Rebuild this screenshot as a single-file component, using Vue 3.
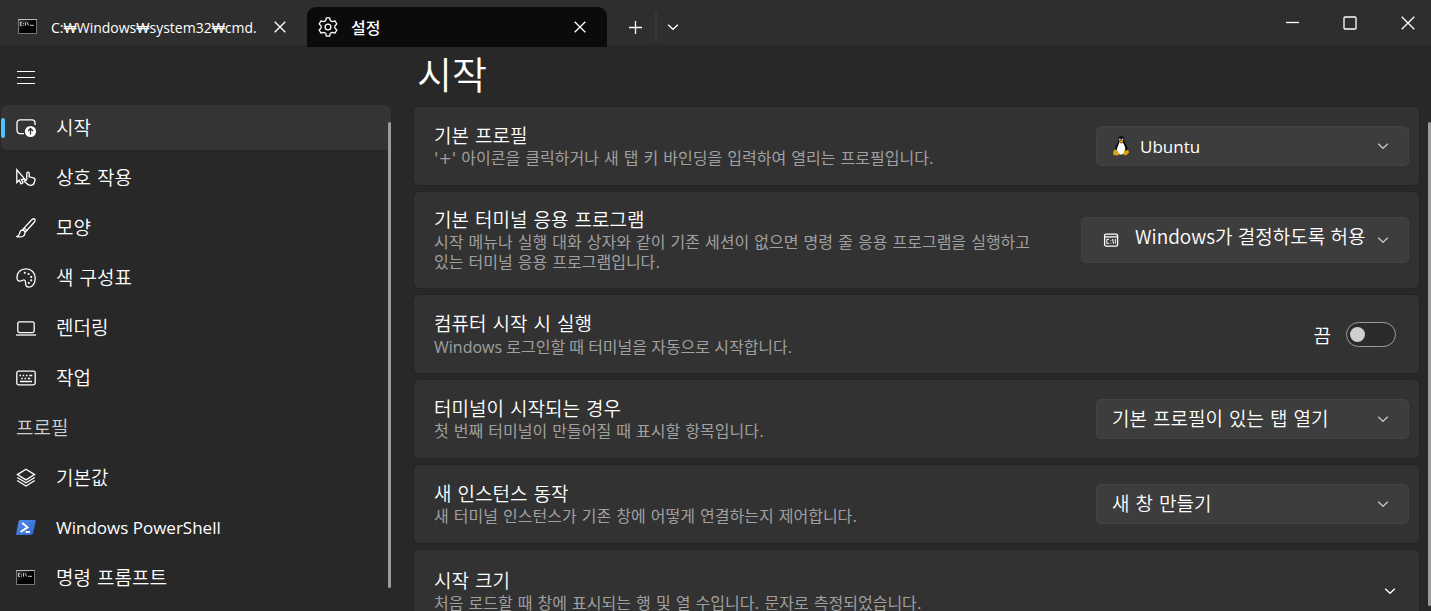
<script setup>
import { ref } from 'vue'

const navItems = [
  { icon: 'launch', label: '시작' },
  { icon: 'pointer', label: '상호 작용' },
  { icon: 'brush', label: '모양' },
  { icon: 'palette', label: '색 구성표' },
  { icon: 'laptop', label: '렌더링' },
  { icon: 'keyboard', label: '작업' },
]
const profileItems = [
  { icon: 'layers', label: '기본값' },
  { icon: 'powershell', label: 'Windows PowerShell', latin: true },
  { icon: 'cmd', label: '명령 프롬프트' },
]
const current = ref('시작')

const cards = [
  {
    id: 'profile',
    title: '기본 프로필',
    text: "'+' 아이콘을 클릭하거나 새 탭 키 바인딩을 입력하여 열리는 프로필입니다.",
    kind: 'select',
    icon: 'tux',
    value: 'Ubuntu',
  },
  {
    id: 'terminal',
    title: '기본 터미널 응용 프로그램',
    text: '시작 메뉴나 실행 대화 상자와 같이 기존 세션이 없으면 명령 줄 응용 프로그램을 실행하고 있는 터미널 응용 프로그램입니다.',
    kind: 'select',
    icon: 'console',
    value: 'Windows가 결정하도록 허용',
  },
  {
    id: 'startup',
    title: '컴퓨터 시작 시 실행',
    text: 'Windows 로그인할 때 터미널을 자동으로 시작합니다.',
    mixed: true,
    kind: 'toggle',
  },
  {
    id: 'launch',
    title: '터미널이 시작되는 경우',
    text: '첫 번째 터미널이 만들어질 때 표시할 항목입니다.',
    kind: 'select',
    value: '기본 프로필이 있는 탭 열기',
  },
  {
    id: 'instance',
    title: '새 인스턴스 동작',
    text: '새 터미널 인스턴스가 기존 창에 어떻게 연결하는지 제어합니다.',
    kind: 'select',
    value: '새 창 만들기',
  },
]
</script>

<template>
  <div class="window" lang="ko">
    <svg class="defs" aria-hidden="true">
      <defs>
        <linearGradient id="ps-fill" x1="0" y1="0" x2="1" y2="1">
          <stop offset="0" stop-color="#5391f0" />
          <stop offset="1" stop-color="#2f62c4" />
        </linearGradient>
        <linearGradient id="cmd-fill" x1="0" y1="0" x2="1" y2="1">
          <stop offset="0" stop-color="#4a4a4a" />
          <stop offset="0.5" stop-color="#000" />
          <stop offset="1" stop-color="#000" />
        </linearGradient>
        <symbol id="i-launch" viewBox="0 0 20 20">
          <path d="M8 15.6H4A3 3 0 0 1 1 12.600V4.800A3 3 0 0 1 4 1.800H16A3 3 0 0 1 19 4.800V7" />
          <circle cx="14.500" cy="13.500" r="5.600" fill="#fff" stroke="none" />
          <path d="M14.500 16.500V10.800M12 13L14.500 10.500L17 13" stroke="#333" />
        </symbol>
        <symbol id="i-pointer" viewBox="0 0 20 20">
          <path d="M0.800 1.800V14.500L3.200 12.200L5 15.800L7 14.800L5.400 11.400H9L0.800 1.800Z" />
          <path d="M10.800 11.800V5.300A1.200 1.200 0 0 1 13.200 5.300V8.800L17.500 9.800Q19.300 10.300 19 12L18.300 14.500Q17.500 17.300 14.500 17.300Q12.300 17.300 11 15.800L8.300 13.300Q9 11.700 10.800 12.500" />
        </symbol>
        <symbol id="i-brush" viewBox="0 0 20 20">
          <path d="M6.300 12L15.500 2Q17.500 0.200 18.700 1Q19.700 2 18.200 4.300L9 14.500M6.300 12Q4.300 12.300 3.800 14.500Q3.500 17.500 0.800 18.600Q5 19.500 7.500 18Q9 16.800 9 14.500Q8.800 12.200 6.300 12ZM8 10.300Q10 10.700 10.700 12.600" />
        </symbol>
        <symbol id="i-palette" viewBox="0 0 20 20">
          <path d="M1 10.500C0.500 4 5 0.800 10 0.800C15.500 0.800 19.200 4.800 19.200 10C19.200 15.500 16.500 19.200 13 19.200C10.300 19.200 9.600 17.300 9.600 15.300C9.600 12.300 8.500 11.400 6.800 12.300C4.500 13.500 1.300 13.700 1 10.500Z" />
          <g fill="currentColor" stroke="none">
            <circle cx="8.800" cy="4.800" r="1.100" /><circle cx="12.600" cy="6" r="1.100" /><circle cx="15.200" cy="8.900" r="1.100" /><circle cx="15.200" cy="12.300" r="1.100" /><circle cx="12.800" cy="15" r="1.100" />
          </g>
        </symbol>
        <symbol id="i-laptop" viewBox="0 0 20 20">
          <rect x="1.800" y="3.800" width="16.400" height="10.800" rx="1.800" />
          <path d="M0 17H20" />
        </symbol>
        <symbol id="i-keyboard" viewBox="0 0 20 20">
          <rect x="0.800" y="3.200" width="18.400" height="13.600" rx="1.800" />
          <path d="M3.500 7.500H5M6.700 7.500H8.200M10 7.500H11.500M13.300 7.500H16.300M5.200 10.500H6.700M8.500 10.500H10M11.800 10.500H14.300M4 13.500H16" stroke-width="1.600" />
        </symbol>
        <symbol id="i-layers" viewBox="0 0 20 20">
          <path d="M10 1.300L18.600 6.600L10 11.900L1.400 6.600ZM1.200 9.500L10 14.800L18.800 9.500M1.200 12.500L10 18L18.800 12.500" />
        </symbol>
        <symbol id="i-powershell" viewBox="0 0 20 20">
          <path d="M4.200 2H18.600Q20 2 19.700 3.300L17 15.700Q16.700 17 15.500 17H1.200Q-0.200 17 0.100 15.700L2.700 3.300Q3 2 4.200 2Z" fill="url(#ps-fill)" stroke="none" />
          <path d="M6.300 5L11.500 9.300L4.600 14" stroke="#fff" stroke-width="2" /><path d="M9.500 14H14" stroke="#fff" stroke-width="1.800" />
        </symbol>
        <symbol id="i-cmd" viewBox="0 0 20 20">
          <rect x="0.500" y="2.500" width="18" height="14" fill="url(#cmd-fill)" stroke="#777" stroke-width="1" />
          <path d="M0 2.500H19" stroke="#b9b9c0" stroke-width="1" />
          <path d="M4 5.600H2.500V8.400H4M5.500 6V6.800M5.500 7.800V8.600M7.500 5.300V8.500M9.300 5.300L10.500 8.500M12 8.300H16" stroke="#ddd" stroke-width="0.900" />
        </symbol>
        <symbol id="i-console" viewBox="0 0 20 20">
          <rect x="3.600" y="4.100" width="13" height="12" rx="1.600" />
          <path d="M3.600 6.900H16.600" />
          <path d="M8 9.300H5.800V13.300H8M9.800 10V10.800M9.800 12.800V13.600M11.500 9L12.500 13.600M14.300 9V13.600" stroke-width="1" />
        </symbol>
        <symbol id="i-tux" viewBox="0 0 20 20">
          <g stroke="none">
            <path d="M10.200 0.300C7.800 0.300 7.200 2 7.400 4.500C7.500 7 4 9.500 3.900 14L6 17.500H14L16.800 14C17 10 13.200 7.500 13.200 4.500C13.300 1.800 12.500 0.300 10.200 0.300Z" fill="#050505" />
            <path d="M8.200 6.300L10.200 7.500L12 6.500C13 9 14.700 10.500 14.200 14.500C13.500 18 11.500 18.700 9.500 18.500C7 18.300 5.800 15.500 6 12.800C6.300 10.500 7.800 9 8.200 6.300Z" fill="#fff" />
            <circle cx="8.800" cy="3.500" r="0.900" fill="#ddd" /><circle cx="11.500" cy="3.500" r="0.900" fill="#ddd" />
            <path d="M7.800 5.200Q10 3.500 12.400 5.200Q11 7.200 10 7Z" fill="#e8a51a" />
            <path d="M4.600 13Q7 14.500 8 18Q7.800 20 5.500 19.500L2.300 18.700Q2 17.500 2.500 15Z" fill="#dca312" />
            <path d="M13.200 14Q15.500 15.500 16.500 13.500Q17.800 15 18.200 16.600Q17 18 15.300 19.200Q13.300 20.200 12.800 18.500Z" fill="#dca312" />
          </g>
        </symbol>
        <symbol id="i-gear" viewBox="0 0 20 20">
          <path d="M8.300 0.900H11.700L12.300 3.600L14.300 4.700L17 3.900L18.800 7L16.900 8.900V11.100L18.800 13L17 16.100L14.300 15.300L12.300 16.400L11.700 19.100H8.300L7.700 16.400L5.700 15.300L3 16.100L1.200 13L3.100 11.100V8.900L1.200 7L3 3.900L5.700 4.700L7.700 3.600Z" stroke-linejoin="round" />
          <circle cx="10" cy="10" r="2.900" />
        </symbol>
        <symbol id="i-close" viewBox="0 0 20 20"><path d="M4.700 4.700L15.300 15.300M15.300 4.700L4.700 15.300" /></symbol>
        <symbol id="i-plus" viewBox="0 0 20 20"><path d="M10.500 4V17M4 10.500H17" /></symbol>
        <symbol id="i-chevron" viewBox="0 0 20 20"><path d="M5.200 7.700L10 12.300L14.800 7.700" /></symbol>
        <symbol id="i-menu" viewBox="0 0 20 20"><path d="M1 4.500H19M1 10.500H19M1 16.500H19" stroke-width="1" /></symbol>
        <symbol id="i-minimize" viewBox="0 0 20 20"><path d="M4 9.500H17" /></symbol>
        <symbol id="i-maximize" viewBox="0 0 20 20"><rect x="4" y="4" width="12" height="12" rx="1" /></symbol>
        <symbol id="i-quit" viewBox="0 0 20 20"><path d="M3.700 3.700L16.300 16.300M16.300 3.700L3.700 16.300" /></symbol>
      </defs>
    </svg>

    <header class="titlebar">
      <div class="tab">
        <svg class="icon"><use href="#i-cmd" /></svg>
        <span class="tab-name latin-name">C:₩Windows₩system32₩cmd.</span>
        <button class="tab-close" aria-label="탭 닫기"><svg class="icon"><use href="#i-close" /></svg></button>
      </div>
      <div class="tab active">
        <svg class="icon"><use href="#i-gear" /></svg>
        <span class="tab-name">설정</span>
        <button class="tab-close" aria-label="탭 닫기"><svg class="icon"><use href="#i-close" /></svg></button>
      </div>
      <div class="tab-tools">
        <button aria-label="새 탭"><svg class="icon"><use href="#i-plus" /></svg></button>
        <button aria-label="새 탭 메뉴"><svg class="icon"><use href="#i-chevron" /></svg></button>
      </div>
      <div class="caption">
        <button aria-label="최소화"><svg class="icon"><use href="#i-minimize" /></svg></button>
        <button aria-label="최대화"><svg class="icon"><use href="#i-maximize" /></svg></button>
        <button aria-label="닫기"><svg class="icon"><use href="#i-quit" /></svg></button>
      </div>
    </header>

    <div class="body">
      <nav class="sidebar">
        <button class="menu" aria-label="탐색 메뉴"><svg class="icon"><use href="#i-menu" /></svg></button>
        <div class="nav-list">
          <button
            v-for="item in navItems"
            :key="item.label"
            class="nav-item"
            :class="{ selected: current === item.label }"
            @click="current = item.label"
          >
            <svg class="icon"><use :href="'#i-' + item.icon" /></svg>
            <span>{{ item.label }}</span>
          </button>
          <h2 class="nav-heading">프로필</h2>
          <button
            v-for="item in profileItems"
            :key="item.label"
            class="nav-item"
            :class="{ selected: current === item.label, latin: item.latin }"
            @click="current = item.label"
          >
            <svg class="icon"><use :href="'#i-' + item.icon" /></svg>
            <span>{{ item.label }}</span>
          </button>
        </div>
        <div class="scroll-thumb"></div>
      </nav>

      <main class="page">
        <h1>시작</h1>
        <section class="cards">
          <div v-for="card in cards" :key="card.id" class="card">
            <div class="card-text">
              <label class="card-title" :for="card.id">{{ card.title }}</label>
              <p :class="{ mixed: card.mixed }">{{ card.text }}</p>
            </div>
            <div v-if="card.kind === 'select'" class="combo" :class="card.icon">
              <select :id="card.id">
                <option>{{ card.value }}</option>
              </select>
              <svg v-if="card.icon" class="icon combo-icon"><use :href="'#i-' + card.icon" /></svg>
              <svg class="icon combo-arrow"><use href="#i-chevron" /></svg>
            </div>
            <div v-else class="toggle">
              <span>끔</span>
              <input :id="card.id" type="checkbox" role="switch" />
            </div>
          </div>
          <button class="card expander">
            <span class="card-text">
              <span class="card-title">시작 크기</span>
              <span class="card-desc">처음 로드할 때 창에 표시되는 행 및 열 수입니다. 문자로 측정되었습니다.</span>
            </span>
            <svg class="icon"><use href="#i-chevron" /></svg>
          </button>
        </section>
        <div class="scroll-thumb"></div>
      </main>
    </div>
  </div>
</template>

<style>
body {
  background: #282828;
}
</style>

<style scoped>
.window {
  display: flex;
  flex-direction: column;
  height: 100vh;
  overflow: hidden;
  background: #282828;
  color: #fff;
  font-family: "DejaVu Sans", "Noto Sans CJK KR", sans-serif;
  font-size: 19px;
  font-weight: 350;
  word-break: keep-all;
}
* {
  box-sizing: border-box;
}
.defs {
  position: absolute;
  width: 0;
  height: 0;
}
button {
  display: flex;
  align-items: center;
  margin: 0;
  padding: 0;
  border: 0;
  background: none;
  color: inherit;
  font: inherit;
  text-align: left;
}
.icon {
  flex: none;
  width: 20px;
  height: 20px;
  fill: none;
  stroke: currentColor;
  stroke-width: 1.3;
}
.titlebar {
  display: flex;
  flex: none;
  align-items: flex-end;
  height: 45px;
  background: #2e2e2e;
  font-size: 16px;
}
.tab {
  display: flex;
  align-items: center;
  width: 289px;
  height: 40px;
  margin: 0 0 -2px 18px;
}
.tab-name {
  flex: 1;
  margin-left: 13px;
  white-space: nowrap;
}
.latin-name {
  font-family: "Open Sans", sans-serif;
  font-size: 14px;
  font-weight: 400;
}
.tab.active {
  z-index: 1;
  width: 300px;
  margin-left: 0;
  padding-left: 11px;
  border-radius: 9px 9px 0 0;
  background: #0b0b0b;
  font-weight: 500;
}
.tab-close {
  margin-right: 17px;
}
.tab-tools {
  display: flex;
  align-self: center;
  margin-top: 9px;
}
.tab-tools button {
  height: 30px;
  padding: 0 10px 0 18px;
}
.tab-tools button + button {
  padding: 0 8px 0 6px;
  border-left: 2px solid #393939;
}
.caption {
  display: flex;
  align-self: flex-start;
  margin-left: auto;
}
.caption button {
  justify-content: center;
  width: 58px;
  height: 45px;
}
.caption button:last-child {
  width: 47px;
  margin-left: 5px;
}
.body {
  display: flex;
  flex: 1;
  min-height: 0;
}
.sidebar {
  position: relative;
  flex: none;
  width: 391px;
  padding-left: 1px;
}
.menu {
  width: 50px;
  height: 60px;
  padding: 4px 0 0 15px;
}
.nav-list {
  display: flex;
  flex-direction: column;
  gap: 5px;
}
.nav-item {
  position: relative;
  gap: 20px;
  width: 100%;
  height: 45px;
  padding-left: 15px;
  border-radius: 6px;
}
.nav-item:not(.latin) span {
  padding-bottom: 2px;
}
.nav-item.latin {
  font-family: "Open Sans", sans-serif;
  font-size: 17px;
  font-weight: 400;
}
.nav-item.selected {
  background: #343434;
}
.nav-item.selected::before {
  content: "";
  position: absolute;
  left: 0;
  width: 4px;
  height: 20px;
  border-radius: 2px;
  background: #4cc2ff;
}
.nav-heading {
  height: 45px;
  margin: 0;
  padding-left: 15px;
  color: #cfcfcf;
  font-size: 19px;
  font-weight: inherit;
  line-height: 47px;
}
.scroll-thumb {
  position: absolute;
  top: 77px;
  right: 0;
  bottom: 23px;
  width: 3px;
  border-radius: 2px;
  background: #9b9b9b;
}
.page {
  position: relative;
  flex: 1;
  min-width: 0;
  padding: 0 12px 0 23px;
  overflow: hidden;
}
.page > .scroll-thumb {
  bottom: 5px;
}
h1 {
  margin: 0;
  padding-left: 3px;
  font-size: 38px;
  font-weight: inherit;
  line-height: 62px;
}
.cards {
  display: flex;
  flex-direction: column;
  gap: 7px;
}
.card {
  display: flex;
  flex: none;
  align-items: center;
  justify-content: space-between;
  gap: 36px;
  min-height: 78px;
  padding: 15px 10px 15px 20px;
  border-radius: 5px;
  background: #323232;
  box-shadow: 0 0 0 1px #252525;
}
.card-text {
  display: block;
}
.card-title {
  display: block;
  line-height: 26px;
}
.card p,
.card-desc {
  display: block;
  margin: 0;
  color: #a0a0a0;
  font-size: 16px;
  font-weight: 400;
  line-height: 20px;
}
.card p.mixed {
  font-family: "Open Sans", "Noto Sans CJK KR", sans-serif;
}
.combo {
  display: flex;
  position: relative;
  flex: none;
  align-items: center;
  width: 313px;
}
select {
  width: 100%;
  height: 40px;
  margin: 0;
  padding: 0 40px 0 15px;
  border: 1px solid #434343;
  border-radius: 5px;
  appearance: none;
  background: #3d3d3d;
  color: #fff;
  font: inherit;
}
.combo-icon,
.combo-arrow {
  position: absolute;
  pointer-events: none;
}
.combo-arrow {
  right: 16px;
  color: #c4c4c4;
}
.combo-icon {
  left: 15px;
}
.tux select {
  padding-left: 43px;
  font-family: "Open Sans", sans-serif;
  font-size: 17px;
  font-weight: 400;
}
.console {
  width: 328px;
}
.console select {
  height: 46px;
  padding: 0 40px 10px 53px;
  font-family: "Noto Sans CJK KR", sans-serif;
}
.console .combo-icon {
  left: 20px;
}
.toggle {
  display: flex;
  align-items: center;
  gap: 15px;
  margin-right: 13px;
}
.toggle input {
  display: flex;
  align-items: center;
  width: 50px;
  height: 25px;
  margin: 0;
  padding: 0 3px;
  border: 1px solid #9a9a9a;
  border-radius: 13px;
  appearance: none;
  background: #2b2b2b;
}
.toggle input::before {
  content: "";
  width: 15px;
  height: 15px;
  border-radius: 50%;
  background: #cfcfcf;
}
.toggle input:checked {
  justify-content: flex-end;
  background: #4cc2ff;
}
.expander {
  min-height: 82px;
  padding-right: 19px;
}
</style>
